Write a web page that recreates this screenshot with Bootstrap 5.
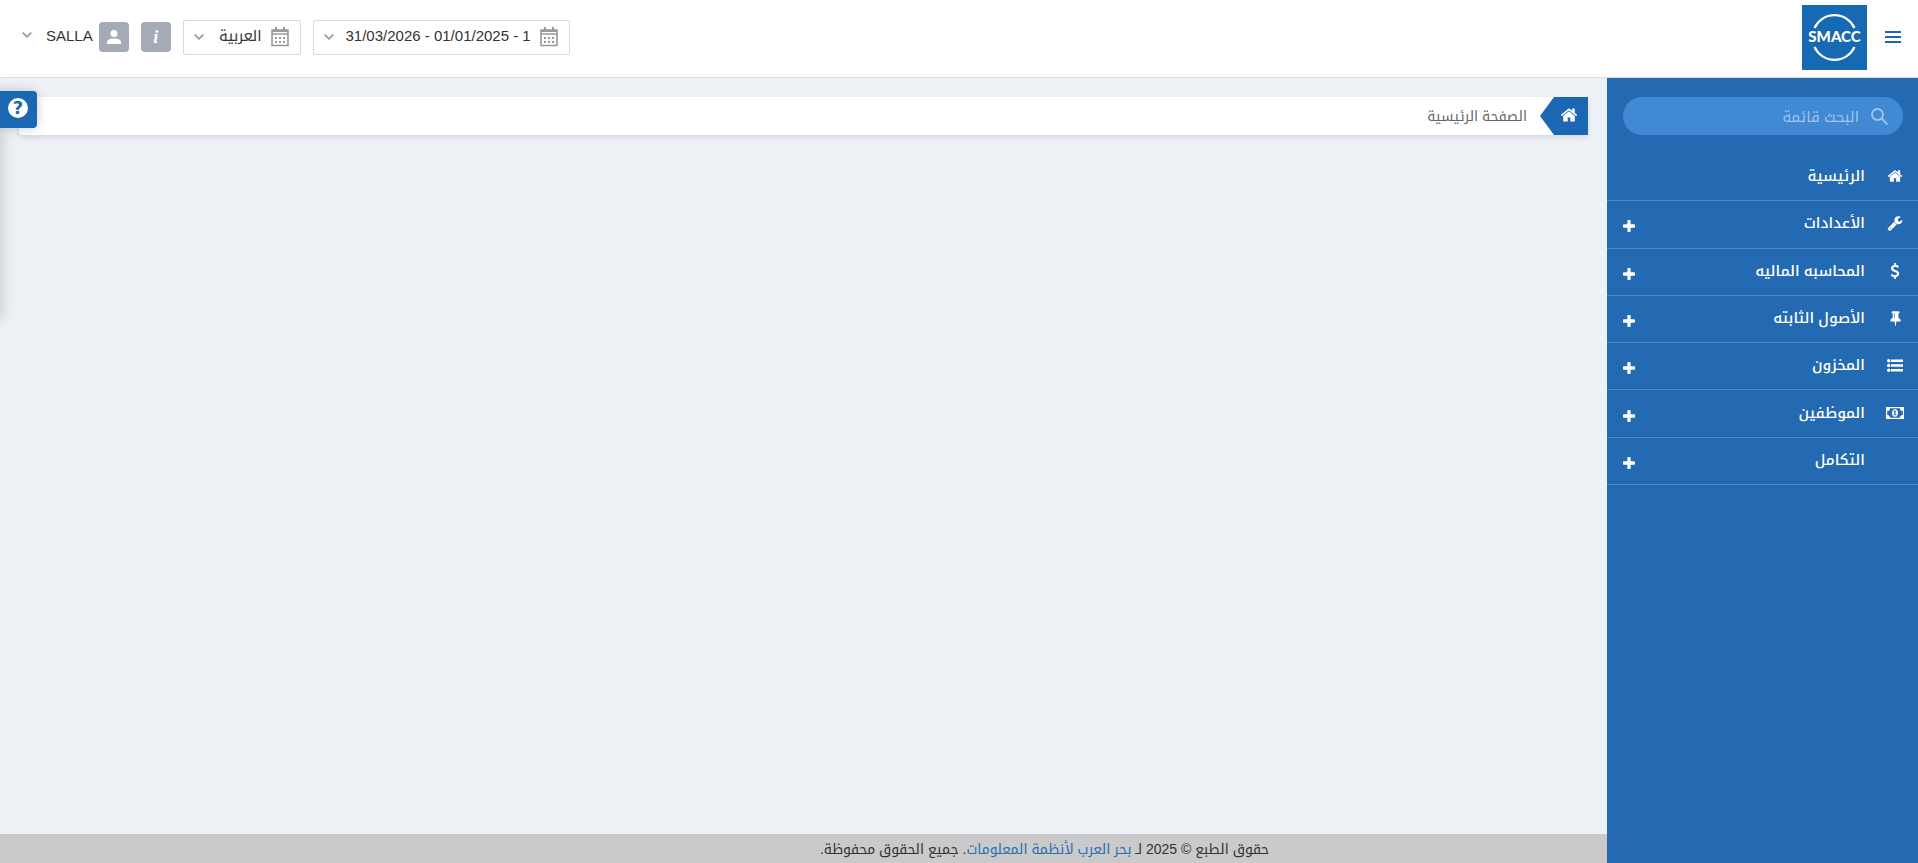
<!DOCTYPE html>
<html lang="ar" dir="rtl">
<head>
<meta charset="utf-8">
<meta name="viewport" content="width=device-width, initial-scale=1">
<title>SMACC</title>
<link href="https://cdn.jsdelivr.net/npm/bootstrap@5.3.0/dist/css/bootstrap.min.css" rel="stylesheet">
<style>
  body { background: #eef1f6; color: #333; font-family: "Liberation Sans", "Noto Kufi Arabic", "Noto Sans Arabic", "DejaVu Sans", sans-serif; font-size: 15px; line-height: 20px; }
  a { color: #2a6db5; }
  .topbar { height: 78px; border-bottom: 1px solid #d9dde1; padding: 0 17px 0 22px; }
  .topbar-start { gap: 18px; padding-bottom: 3px; }
  .menu-toggle { width: 16px; height: 16px; line-height: 0; color: #1b67b3; }
  .brand { width: 65px; height: 65px; }
  .tools { gap: 12px; padding-bottom: 3px; }
  .picker { height: 35px; border: 1px solid #d9d9d9; border-radius: 2px; padding: 0 11px 0 10px; gap: 9px; color: #999; }
  .picker select { appearance: none; border: 0; background: none; padding: 0; color: #333; height: 30px; margin-bottom: 3px; }
  .picker-period select { width: 188px; }
  .picker-language select { width: 49px; }
  .square { width: 30px; height: 30px; border-radius: 4px; background: #a4abb7; color: #fff; }
  .info-mark { font: italic bold 18px/30px "Liberation Serif", serif; }
  .user { gap: 6px; color: #333; }
  .user-name { padding-bottom: 2px; }
  .user .chevron { margin-inline-start: 8px; margin-bottom: 4px; color: #999; }
  .side { width: 311px; background: #236ab2; padding-top: 19px; }
  .menu-search { height: 38px; margin: 0 15px 19px 16px; border-radius: 19px; background: #4189d2; padding: 0 15px; gap: 12px; color: #9cc5f2; }
  .menu-search input { border: 0; background: none; outline: 0; padding: 0; min-width: 0; color: #fff; height: 30px; }
  .menu-search input::placeholder { color: #9cc5f2; opacity: 1; }
  .side-list { height: 331px; }
  .side-link { border-bottom: 1px solid #4f89c3; padding: 0 15px 2px 16px; color: #fff; text-decoration: none; font-weight: 500; }
  .side-link:hover { color: #fff; }
  .side-icon { width: 16px; margin-inline-end: 22px; display: flex; justify-content: center; }
  .side-plus { margin-top: 6px; }
  .crumbs { height: 38px; margin: 19px; border-radius: 4px; box-shadow: 0 3px 6px rgba(0,0,0,.1); color: #666; font-size: 14px; }
  .crumb-home { width: 48px; height: 38px; padding-inline-start: 10px; padding-bottom: 2px; background: #1b67b3; color: #fff; clip-path: polygon(100% 0, 14px 0, 0 50%, 14px 100%, 100% 100%); }
  .crumb-text { margin-inline-start: 13px; }
  .foot { background: #cacaca; height: 29px; padding-top: 1px; }
  .foot-text { width: 70%; font-size: 14px; line-height: 28px; }
  .help-edge { position: absolute; left: 0; top: 71px; width: 40px; height: 269px; padding: 20px 0; pointer-events: none; }
  .help-drawer { width: 300px; height: 229px; margin-right: 40px; box-shadow: 0 0 16px rgba(0,0,0,.2); }
  .help-tab { position: absolute; left: 0; top: 91px; width: 37px; height: 37px; border: 0; border-radius: 0 4px 4px 0; background: #1b67b3; box-shadow: 0 0 12px rgba(0,0,0,.2); padding: 0 0 4px 8px; direction: ltr; }
  .help-mark { display: block; width: 20px; height: 20px; border-radius: 50%; background: #fff; color: #1b67b3; font: bold 18px/20px "DejaVu Sans", sans-serif; text-align: center; }
</style>
</head>
<body class="min-vh-100 d-flex flex-column">

<svg class="d-none">
  <symbol id="home" viewBox="0 0 1792 1792"><path d="M1472 992v480q0 26-19 45t-45 19h-384v-384h-256v384h-384q-26 0-45-19t-19-45v-480q0-1 .5-3t.5-3l575-474 575 474q1 2 1 6zm223-69l-62 74q-8 9-21 11h-3q-13 0-21-7l-692-577-692 577q-12 8-24 7-13-2-21-11l-62-74q-8-10-7-23.500t11-21.500l719-599q32-26 76-26t76 26l244 204v-195q0-14 9-23t23-9h192q14 0 23 9t9 23v408l219 182q10 8 11 21.500t-7 23.500z"/></symbol>
  <symbol id="plus" viewBox="192 128 1408 1408"><path d="M1600 736v192q0 40-28 68t-68 28h-416v416q0 40-28 68t-68 28h-192q-40 0-68-28t-28-68v-416h-416q-40 0-68-28t-28-68v-192q0-40 28-68t68-28h416v-416q0-40 28-68t68-28h192q40 0 68 28t28 68v416h416q40 0 68 28t28 68z"/></symbol>
  <symbol id="calendar" viewBox="0 0 18 20"><path fill="none" stroke="currentColor" stroke-width="1.600" d="M1 3h16v15.500H1zM1 7h16"/><path d="M1 3h16v2H1zM4 0h2v4H4zM12 0h2v4h-2zM4 10h2v2H4zM8 10h2v2H8zM12 10h2v2h-2zM4 14h2v2H4zM8 14h2v2H8zM12 14h2v2h-2z"/></symbol>
  <symbol id="chevron" viewBox="0 0 10 6"><path fill="none" stroke="currentColor" stroke-width="1.700" d="M.7.7 5 4.800 9.300.7"/></symbol>
</svg>

<header class="topbar bg-white d-flex align-items-center justify-content-between">
  <div class="topbar-start d-flex align-items-center">
    <button type="button" class="menu-toggle btn p-0 border-0 rounded-0" aria-label="القائمة">
      <svg width="16" height="12" viewBox="0 0 16 12" fill="currentColor"><path d="M0 0h16v2H0zM0 5h16v2H0zM0 10h16v2H0z"/></svg>
    </button>
    <a href="#" class="brand d-block">
      <svg class="d-block" width="65" height="65" viewBox="0 0 65 65" direction="ltr">
        <path fill="#166ab3" d="M0 0h65v65H0z"/>
        <path fill="none" stroke="#fff" stroke-width="2.200" d="M12.500 23a22 22 0 0 1 40 0M12.500 42a22 22 0 0 0 40 0"/>
        <text x="32.500" y="37" text-anchor="middle" fill="#fff" font-family="Lato, sans-serif" font-weight="900" font-size="15">SMACC</text>
      </svg>
    </a>
  </div>
  <div class="tools d-flex align-items-center">
    <label class="picker picker-period d-flex align-items-center">
      <svg width="18" height="20" fill="currentColor"><use href="#calendar"/></svg>
      <select aria-label="الفترة"><option>1 - 01/01/2025 - 31/03/2026</option></select>
      <svg width="10" height="6"><use href="#chevron"/></svg>
    </label>
    <label class="picker picker-language d-flex align-items-center justify-content-between">
      <svg width="18" height="20" fill="currentColor"><use href="#calendar"/></svg>
      <select aria-label="اللغة"><option>العربية</option></select>
      <svg width="10" height="6"><use href="#chevron"/></svg>
    </label>
    <button type="button" class="square border-0 p-0"><span class="info-mark">i</span></button>
    <button type="button" class="user d-flex align-items-center border-0 bg-transparent p-0">
      <span class="square d-flex align-items-center justify-content-center">
        <svg width="14" height="14" viewBox="0 0 14 14" fill="currentColor"><circle cx="7" cy="3.500" r="3.500"/><path d="M0 14v-2q0-3.500 7-3.500t7 3.500v2z"/></svg>
      </span>
      <span class="user-name">SALLA</span>
      <svg class="chevron" width="10" height="6"><use href="#chevron"/></svg>
    </button>
  </div>
</header>

<div class="d-flex flex-grow-1">
  <nav class="side flex-shrink-0">
    <label class="menu-search d-flex align-items-center">
      <svg width="17" height="17" viewBox="0 0 17 17" fill="none" stroke="currentColor" stroke-width="1.800"><circle cx="6.500" cy="6.500" r="5.500"/><path d="m10.500 10.500 6 6"/></svg>
      <input type="text" class="flex-grow-1" placeholder="البحث قائمة" aria-label="البحث قائمة">
    </label>
    <div class="side-list d-flex flex-column">
      <a href="#" class="side-link flex-fill d-flex align-items-center">
        <span class="side-icon"><svg width="16" height="16" fill="currentColor"><use href="#home"/></svg></span><span>الرئيسية</span>
      </a>
      <a href="#" class="side-link flex-fill d-flex align-items-center">
        <span class="side-icon"><svg width="16" height="16" viewBox="0 0 1792 1792" fill="currentColor"><path d="M448 1472q0-26-19-45t-45-19-45 19-19 45 19 45 45 19 45-19 19-45zm644-420l-682 682q-37 37-90 37-52 0-91-37l-106-108q-38-36-38-90 0-53 38-91l681-681q39 98 114.500 173.500t173.500 114.500zm634-435q0 39-23 106-47 134-164.500 217.500t-258.500 83.500q-185 0-316.500-131.500t-131.500-316.500 131.500-316.500 316.500-131.500q58 0 121.500 16.500t107.500 46.500q16 11 16 28t-16 28l-293 169v224l193 107q5-3 79-48.500t135.500-81 70.500-35.500q15 0 23.500 10t8.500 25z"/></svg></span><span>الأعدادات</span>
        <svg class="side-plus me-auto" width="12" height="12" fill="currentColor"><use href="#plus"/></svg>
      </a>
      <a href="#" class="side-link flex-fill d-flex align-items-center">
        <span class="side-icon"><svg width="16" height="16" viewBox="0 0 1792 1792" fill="currentColor"><path d="M1362 1185q0 153-99.500 263.500t-258.500 136.500v175q0 14-9 23t-23 9h-135q-13 0-22.500-9.500t-9.500-22.500v-175q-66-9-127.500-31t-101.500-44.500-74-48-46.500-37.500-17.500-18q-17-21-2-41l103-135q7-10 23-12 15-2 24 9l2 2q113 99 243 125 37 8 74 8 81 0 142.500-43t61.500-122q0-28-15-53t-33.500-42-58.500-37.500-66-32-80-32.500q-39-16-61.500-25t-61.500-26.500-62.500-31-56.500-35.500-53.500-42.500-43.500-49-35.500-58-21-66.500-8.500-78q0-138 98-242t255-134v-180q0-13 9.500-22.500t22.500-9.500h135q14 0 23 9t9 23v176q57 6 110.500 23t87 33.500 63.500 37.500 39 29 15 14q17 18 5 38l-81 146q-8 15-23 16-14 3-27-7-3-3-14.500-12t-39-26.500-58.500-32-74.500-26-85.500-11.500q-95 0-155 43t-60 111q0 26 8.500 48t29.500 41.500 39.500 33 56 31 60.500 27 70 27.500q53 20 81 31.500t76 35 75.500 42.500 62 50 53 63.500 31.500 76.500 13 94z"/></svg></span><span>المحاسبه الماليه</span>
        <svg class="side-plus me-auto" width="12" height="12" fill="currentColor"><use href="#plus"/></svg>
      </a>
      <a href="#" class="side-link flex-fill d-flex align-items-center">
        <span class="side-icon"><svg width="16" height="16" viewBox="-64 0 1792 1792" fill="currentColor"><path d="M800 864v-448q0-14-9-23t-23-9-23 9-9 23v448q0 14 9 23t23 9 23-9 9-23zm672 352q0 26-19 45t-45 19h-429l-51 483q-2 12-10.500 20.500t-20.500 8.500h-1q-27 0-32-27l-76-485h-404q-26 0-45-19t-19-45q0-123 78.500-221.500t177.500-98.500v-512q-52 0-90-38t-38-90 38-90 90-38h640q52 0 90 38t38 90-38 90-90 38v512q99 0 177.500 98.500t78.500 221.500z"/></svg></span><span>الأصول الثابته</span>
        <svg class="side-plus me-auto" width="12" height="12" fill="currentColor"><use href="#plus"/></svg>
      </a>
      <a href="#" class="side-link flex-fill d-flex align-items-center">
        <span class="side-icon"><svg width="16" height="13" viewBox="0 0 16 13" fill="currentColor"><circle cx="1.700" cy="1.700" r="1.700"/><circle cx="1.700" cy="6.500" r="1.700"/><circle cx="1.700" cy="11.300" r="1.700"/><path d="M4 .5H16v2.500H4zM4 5.300H16v2.500H4zM4 10H16v2.500H4z"/></svg></span><span>المخزون</span>
        <svg class="side-plus me-auto" width="12" height="12" fill="currentColor"><use href="#plus"/></svg>
      </a>
      <a href="#" class="side-link flex-fill d-flex align-items-center">
        <span class="side-icon"><svg class="flex-shrink-0" width="18" height="12" viewBox="0 0 18 12" fill="currentColor"><path fill-rule="evenodd" d="M0 0h18v12H0zM4 1.200A2.800 2.800 0 0 1 1.200 4v4A2.800 2.800 0 0 1 4 10.800h10A2.800 2.800 0 0 1 16.800 8V4A2.800 2.800 0 0 1 14 1.200z"/><path fill-rule="evenodd" d="M9 2.200a3 3.800 0 0 1 0 7.600 3 3.800 0 0 1 0-7.600zM8.500 3.500 7.300 4.700l.6.600.5-.4v2.600h-1v.8h3.200v-.8h-1v-4z"/></svg></span><span>الموظفين</span>
        <svg class="side-plus me-auto" width="12" height="12" fill="currentColor"><use href="#plus"/></svg>
      </a>
      <a href="#" class="side-link flex-fill d-flex align-items-center">
        <span class="side-icon"></span><span>التكامل</span>
        <svg class="side-plus me-auto" width="12" height="12" fill="currentColor"><use href="#plus"/></svg>
      </a>
    </div>
  </nav>

  <div class="flex-grow-1 d-flex flex-column">
    <main class="flex-grow-1">
      <div class="crumbs bg-white d-flex align-items-center">
        <a href="#" class="crumb-home d-flex align-items-center" aria-label="الرئيسية"><svg width="18" height="18" fill="currentColor"><use href="#home"/></svg></a>
        <span class="crumb-text">الصفحة الرئيسية</span>
      </div>
    </main>
    <footer class="foot">
      <div class="foot-text text-center">حقوق الطبع © 2025 لـ <a href="#" class="text-decoration-none">بحر العرب لأنظمة المعلومات</a>. جميع الحقوق محفوظة.</div>
    </footer>
  </div>
</div>

<aside class="help-edge overflow-hidden" aria-hidden="true"><div class="help-drawer"></div></aside>
<button type="button" class="help-tab"><span class="help-mark">?</span></button>

<script src="https://cdn.jsdelivr.net/npm/bootstrap@5.3.0/dist/js/bootstrap.bundle.min.js"></script>
</body>
</html>
